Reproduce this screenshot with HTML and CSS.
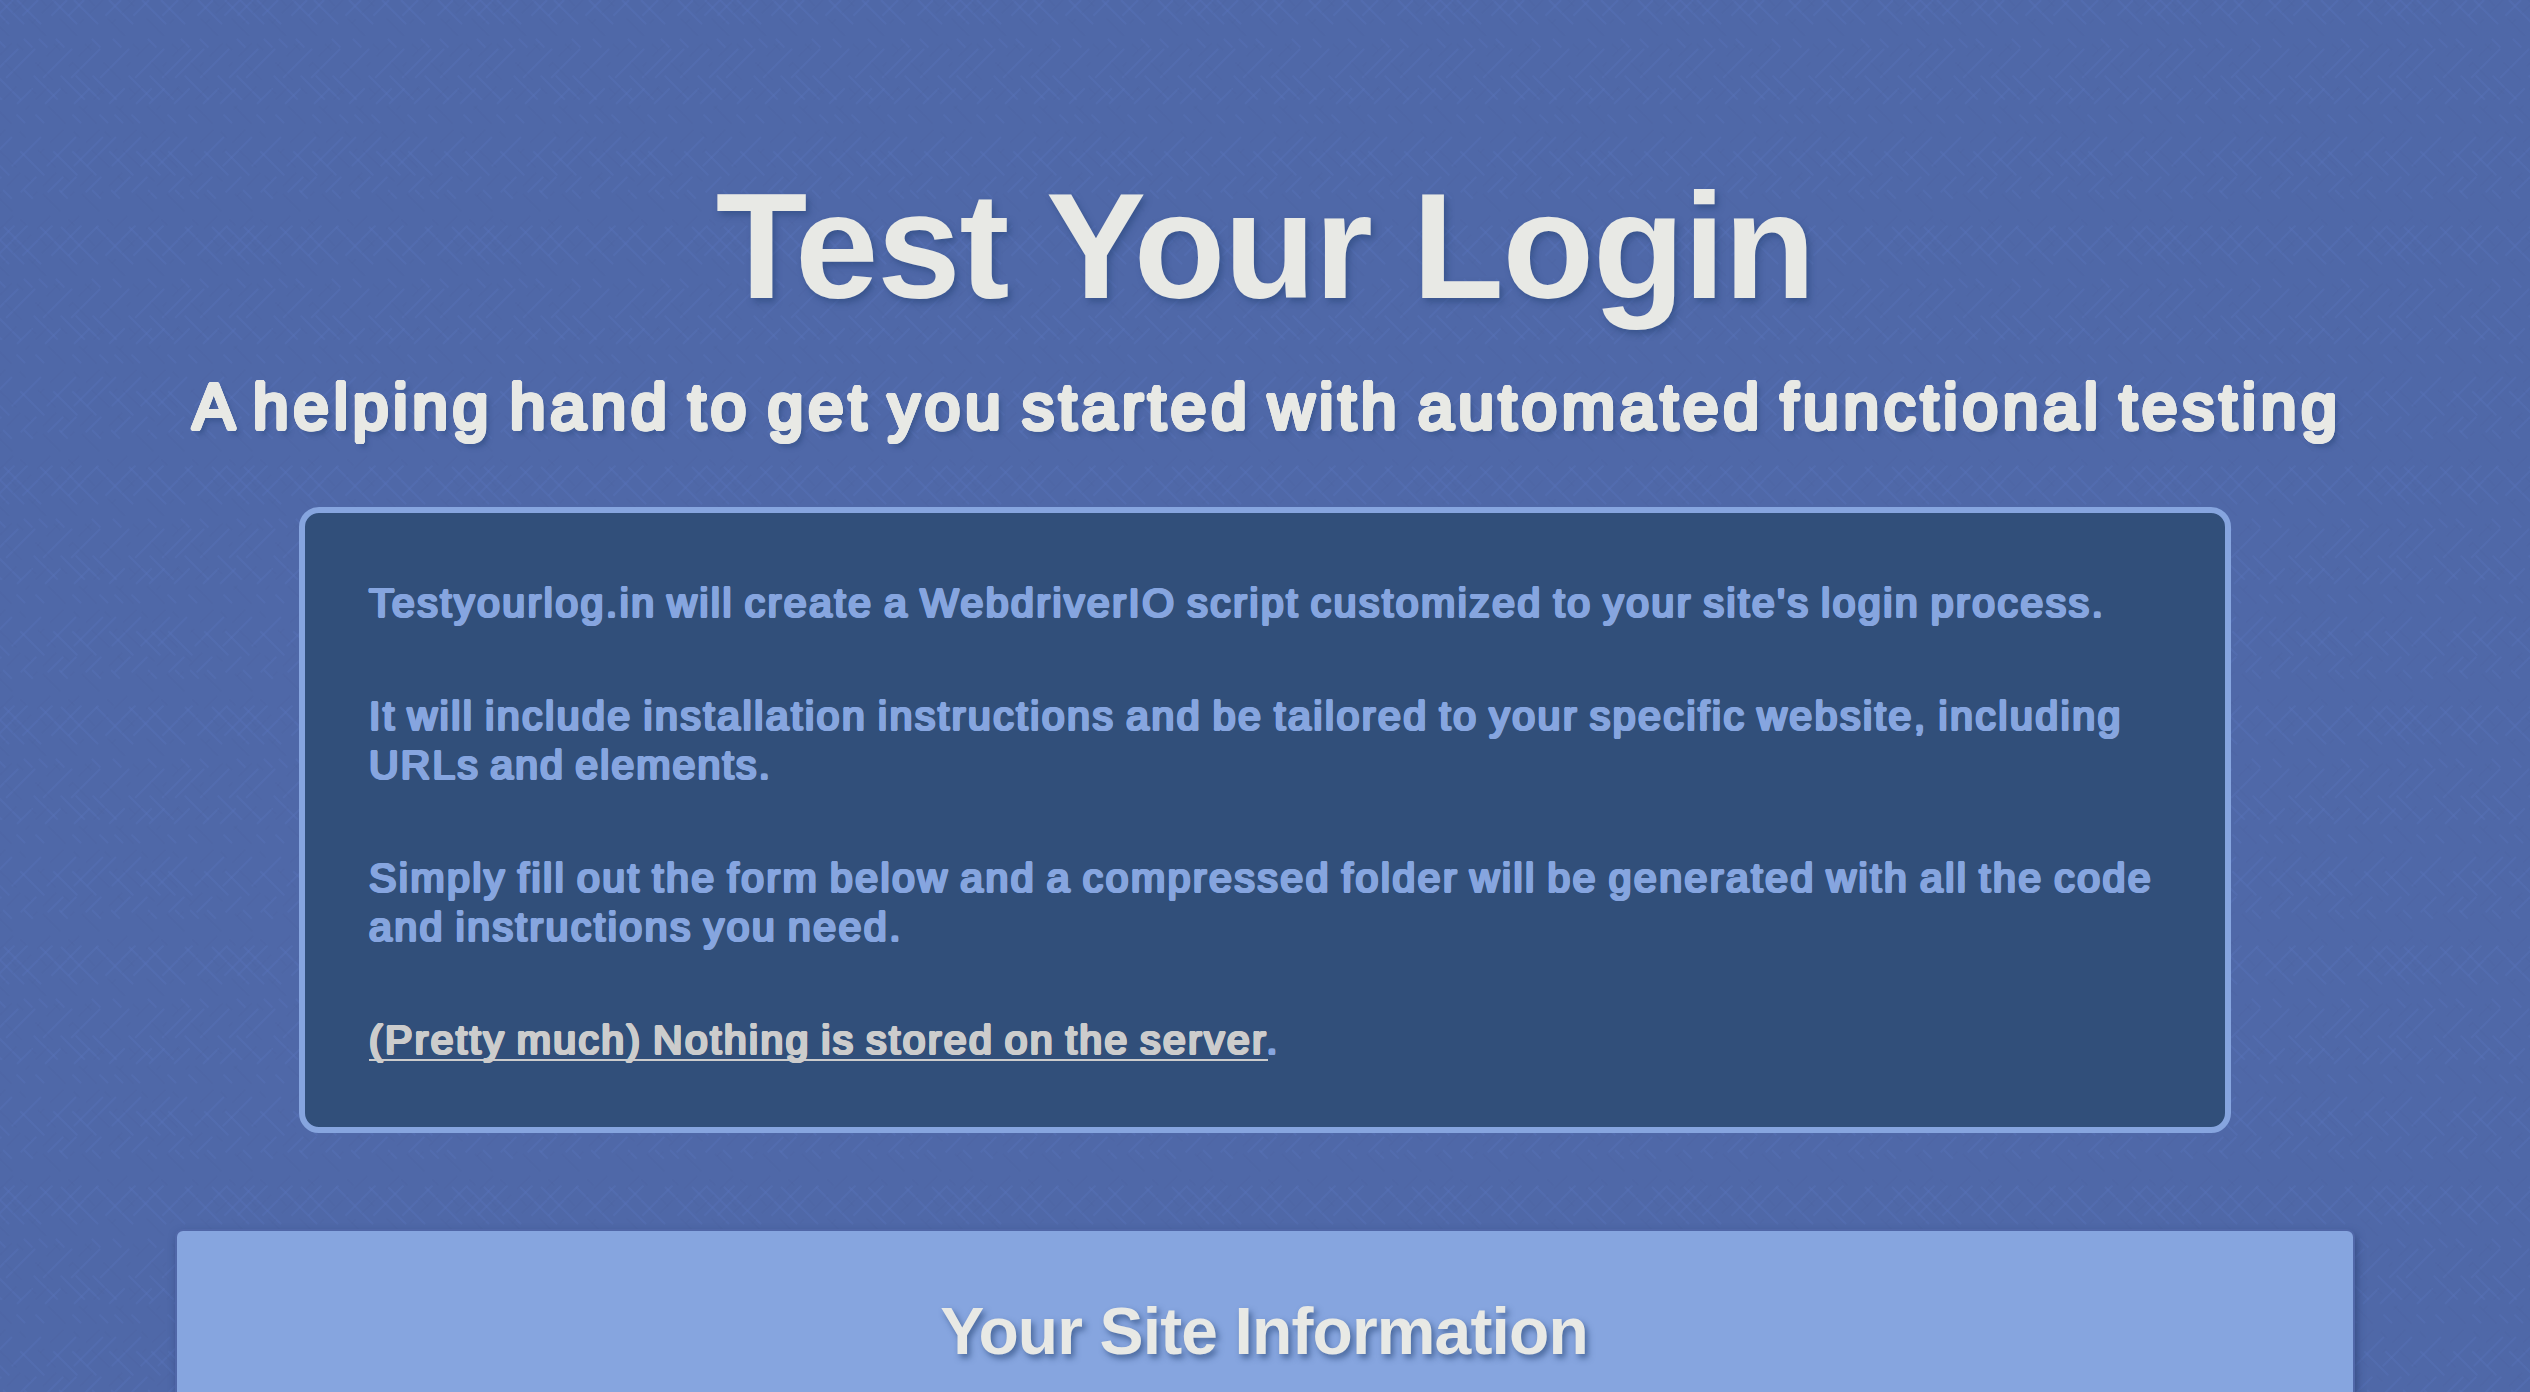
FILE: index.html
```html
<!DOCTYPE html>
<html lang="en">
<head>
<meta charset="utf-8">
<title>Test Your Login</title>
<link rel="stylesheet" href="styles.css">
</head>
<body>
<header class="masthead">
<h1 class="title">Test Your Login</h1>
<p class="tagline">A helping hand to get you started with automated functional testing</p>
</header>
<main class="content">
<section class="intro">
<p><span class="line l1">Testyourlog.in will create a WebdriverIO script customized to your site's login process.</span></p>
<p><span class="line l2">It will include installation instructions and be tailored to your specific website, including</span> <span class="line l3">URLs and elements.</span></p>
<p><span class="line l4">Simply fill out the form below and a compressed folder will be generated with all the code</span> <span class="line l5">and instructions you need.</span></p>
<p><span class="line l6"><a class="privacy" href="#">(Pretty much) Nothing is stored on the server</a><span class="stop">.</span></span></p>
</section>
<section class="card">
<h2 class="card-title">Your Site Information</h2>
</section>
</main>
</body>
</html>
```
FILE: styles.css
```css
html, body { height: 100%; }
body {
  margin: 0;
  overflow: hidden;
  color: #e8e9e5;
  font-family: "Liberation Sans", Arial, sans-serif;
  background-color: #4f68a8;
  background-image: url("data:image/svg+xml,%3Csvg xmlns='http://www.w3.org/2000/svg' width='240' height='240'%3E%3Cg fill='none' stroke='%235772b8' stroke-width='1.8' stroke-opacity='.45'%3E%3Cpath stroke-dasharray='34 21 12 40' d='M-240 0l240 240M-223 0l240 240M-187 0l240 240M-166 0l240 240M-131 0l240 240M-98 0l240 240M-79 0l240 240M-42 0l240 240M-15 0l240 240M0 0l240 240M17 0l240 240M53 0l240 240M74 0l240 240M109 0l240 240M142 0l240 240M161 0l240 240M198 0l240 240M225 0l240 240'/%3E%3Cpath stroke-dasharray='22 47 41 15' d='M0 0l-240 240M13 0l-240 240M38 0l-240 240M67 0l-240 240M84 0l-240 240M121 0l-240 240M149 0l-240 240M178 0l-240 240M213 0l-240 240M240 0l-240 240M253 0l-240 240M278 0l-240 240M307 0l-240 240M324 0l-240 240M361 0l-240 240M389 0l-240 240M418 0l-240 240M453 0l-240 240'/%3E%3C/g%3E%3Cg fill='none' stroke='%23486199' stroke-width='2' stroke-opacity='.18'%3E%3Cpath stroke-dasharray='9 17 25 11' d='M-230 0l240 240M-199 0l240 240M-151 0l240 240M-112 0l240 240M-58 0l240 240M-27 0l240 240M10 0l240 240M41 0l240 240M89 0l240 240M128 0l240 240M182 0l240 240M213 0l240 240'/%3E%3Cpath stroke-dasharray='19 8 6 28' d='M26 0l-240 240M55 0l-240 240M103 0l-240 240M135 0l-240 240M193 0l-240 240M229 0l-240 240M266 0l-240 240M295 0l-240 240M343 0l-240 240M375 0l-240 240M433 0l-240 240M469 0l-240 240'/%3E%3C/g%3E%3C/svg%3E");
}
.masthead {
  display: flex;
  flex-direction: column;
  align-items: center;
  padding-top: 162px;
  white-space: nowrap;
}
.title {
  margin: 0;
  font-size: 150px;
  line-height: 168px;
  letter-spacing: -1.2px;
  text-shadow: 3px 4px 6px rgba(35, 65, 115, .5);
}
/* The ring of hard shadows thickens the strokes and rounds their ends. */
.tagline {
  margin: 40px 0 0 4px;
  font-size: 64px;
  line-height: 74px;
  letter-spacing: 4.83px;
  word-spacing: -6px;
  text-shadow:
    2.2px 0 0, 1.9px 1.1px 0, 1.1px 1.9px 0, 0 2.2px 0,
    -1.1px 1.9px 0, -1.9px 1.1px 0, -2.2px 0 0, -1.9px -1.1px 0,
    -1.1px -1.9px 0, 0 -2.2px 0, 1.1px -1.9px 0, 1.9px -1.1px 0,
    1px 0 0, -1px 0 0,
    4px 5px 5px rgba(35, 65, 115, .5);
}
.content {
  display: flex;
  flex-direction: column;
  align-items: center;
  gap: 98px;
  padding-top: 63px;
}
.intro {
  box-sizing: border-box;
  width: 1932px;
  display: flex;
  flex-direction: column;
  gap: 64px;
  padding: 65.5px 64px 62.5px;
  border: 6px solid #86a5df;
  border-radius: 20px;
  background: #314f7a;
  color: #86a5df;
  font-size: 41px;
  line-height: 49px;
  word-spacing: -3.2px;
  white-space: nowrap;
  text-shadow:
    1.4px 0 0, 1px 1px 0, 0 1.4px 0, -1px 1px 0,
    -1.4px 0 0, -1px -1px 0, 0 -1.4px 0, 1px -1px 0;
}
.intro p { margin: 0; }
.line { display: block; }
.l1 { letter-spacing: 2.47px; }
.l2 { letter-spacing: 2.51px; }
.l3 { letter-spacing: 2.11px; }
.l4 { letter-spacing: 2.49px; }
.l5 { letter-spacing: 2.5px; }
.l6 { letter-spacing: 2.35px; }
.privacy {
  color: #ccc;
  text-decoration: none;
  background: linear-gradient(#ccc, #ccc) 0 42px / 100% 2px no-repeat;
}
.stop { margin-left: -2px; }
.card {
  box-sizing: border-box;
  width: 2176px;
  height: 161px;
  padding-top: 62px;
  border-radius: 6px 6px 0 0;
  background: #86a5df;
  box-shadow: 0 0 0 2px #5067a8, 2px 4px 10px 1px rgba(30, 50, 100, .6);
  text-align: center;
}
.card-title {
  margin: 0 2px 0 0;
  font-size: 66px;
  line-height: 76px;
  letter-spacing: -.88px;
  text-shadow: 3px 4px 6px rgba(40, 70, 120, .65);
}
```
